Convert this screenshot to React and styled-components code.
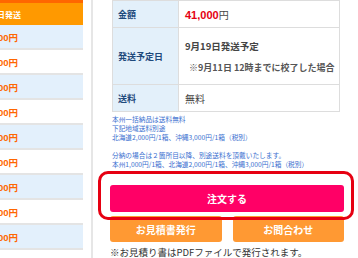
import React from 'react';
import styled, { createGlobalStyle } from 'styled-components';

const GlobalStyle = createGlobalStyle`
  html, body {
    margin: 0;
    padding: 0;
    background: #fff;
    overflow: hidden;
  }
  body {
    font-family: "Noto Sans CJK JP", "Liberation Sans", sans-serif;
    color: #333;
  }
`;

const prices = ['41,000円', '42,000円', '43,000円', '44,000円', '45,000円', '46,000円', '47,000円', '48,000円', '49,000円'];

const App = () => {
  return (
    <>
      <GlobalStyle />
      <Page>
        <SideCol>
          <SideInner>
            <SideHead>9月19日発送</SideHead>
            {prices.map((p, i) => (
              <SideRow key={p} $alt={i % 2 === 1}>{p}</SideRow>
            ))}
          </SideInner>
        </SideCol>
        <Main>
          <Table>
            <Row>
              <Label>金額</Label>
              <Value>
                <span><Price>41,000</Price>円</span>
              </Value>
            </Row>
            <Row>
              <Label>発送予定日</Label>
              <Value $tall>
                <Strong>9月19日発送予定</Strong>
                <Note>※9月11日 12時までに校了した場合</Note>
              </Value>
            </Row>
            <Row>
              <Label>送料</Label>
              <Value>無料</Value>
            </Row>
          </Table>
          <Notes>
            本州一括納品は送料無料<br />
            下記地域送料別途<br />
            北海道2,000円/1箱、沖縄3,000円/1箱（税別）<br />
            <br />
            分納の場合は２箇所目以降、別途送料を頂戴いたします。<br />
            本州1,000円/1箱、北海道2,000円/1箱、沖縄3,000円/1箱（税別）
          </Notes>
          <OrderWrap>
            <OrderButton>注文する</OrderButton>
            <Highlight />
          </OrderWrap>
          <SubButtons>
            <SubButton>お見積書発行</SubButton>
            <SubButton>お問合わせ</SubButton>
          </SubButtons>
          <Foot>※お見積り書はPDFファイルで発行されます。</Foot>
        </Main>
      </Page>
    </>
  );
};

export default App;

const Page = styled.div`
  display: flex;
  width: 358px;
  height: 258px;
  overflow: hidden;
`;

const SideCol = styled.div`
  width: 83px;
  flex-shrink: 0;
  overflow: hidden;
`;

const SideInner = styled.div`
  margin-left: -60px;
  display: flex;
  flex-direction: column;
`;

const SideHead = styled.div`
  height: 22px;
  border-top: 3px solid #f60;
  background: #f90;
  color: #fff;
  font-size: 8px;
  font-weight: bold;
  display: flex;
  align-items: center;
  justify-content: flex-end;
  padding-right: 62px;
`;

const SideRow = styled.div`
  height: 23px;
  border-bottom: 2px solid #e4e4e4;
  background: ${p => (p.$alt ? '#fff' : '#e3f0fc')};
  color: #f60;
  font-size: 9.5px;
  font-weight: bold;
  font-family: "Liberation Sans", "Noto Sans CJK JP", sans-serif;
  display: flex;
  align-items: center;
  justify-content: flex-end;
  padding-right: 65px;
`;

const Main = styled.div`
  margin-left: 8px;
  border-left: 2px solid #e6e6e6;
  padding-left: 19px;
  width: 229px;
  display: flex;
  flex-direction: column;
`;

const Table = styled.div`
  margin-top: -1px;
  width: 226px;
  border: 1px solid #ddd;
  display: flex;
  flex-direction: column;
`;

const Row = styled.div`
  display: flex;
  border-top: 1px solid #ddd;
`;

const Label = styled.div`
  width: 60px;
  flex-shrink: 0;
  background: #e3f0fa;
  color: #1e4a7c;
  font-size: 9px;
  font-weight: bold;
  display: flex;
  align-items: center;
  padding-left: 5px;
  border-right: 1px solid #ddd;
`;

const Value = styled.div`
  flex: 1;
  min-height: ${p => (p.$tall ? '56px' : '26px')};
  display: flex;
  flex-direction: column;
  justify-content: center;
  gap: ${p => (p.$tall ? '8px' : '0')};
  padding-left: 6px;
  font-size: 10px;
  color: #444;
`;

const Price = styled.span`
  color: #e50012;
  font-weight: bold;
  font-size: 11px;
  font-family: "Liberation Sans", sans-serif;
`;

const Strong = styled.div`
  font-size: 9.5px;
  font-weight: bold;
  color: #444;
`;

const Note = styled.div`
  font-size: 9px;
  font-weight: bold;
  color: #555;
  padding-left: 4px;
`;

const Notes = styled.div`
  margin-top: 3px;
  font-size: 6.7px;
  line-height: 9px;
  color: #3a6fd0;
  white-space: nowrap;
`;

const OrderWrap = styled.div`
  position: relative;
  margin: 16px -3px 0 -2px;
`;

const OrderButton = styled.div`
  height: 27px;
  background: #ff0066;
  border-radius: 3px;
  color: #fff;
  font-size: 10px;
  font-weight: bold;
  display: flex;
  align-items: center;
  justify-content: center;
`;

const Highlight = styled.div`
  position: absolute;
  top: -14px;
  left: -12px;
  right: -10px;
  bottom: -8px;
  border: 3px solid #e60012;
  border-radius: 10px;
  pointer-events: none;
  z-index: 2;
`;

const SubButtons = styled.div`
  display: grid;
  grid-template-columns: 1fr 1fr;
  gap: 11px;
  margin: 4px -3px 0 -2px;
`;

const SubButton = styled.div`
  height: 26px;
  background: #ff9933;
  border-radius: 3px;
  color: #fff;
  font-size: 10px;
  font-weight: bold;
  display: flex;
  align-items: center;
  justify-content: center;
`;

const Foot = styled.div`
  margin: 3px 0 0 -2px;
  font-size: 9.5px;
  color: #333;
  white-space: nowrap;
`;
